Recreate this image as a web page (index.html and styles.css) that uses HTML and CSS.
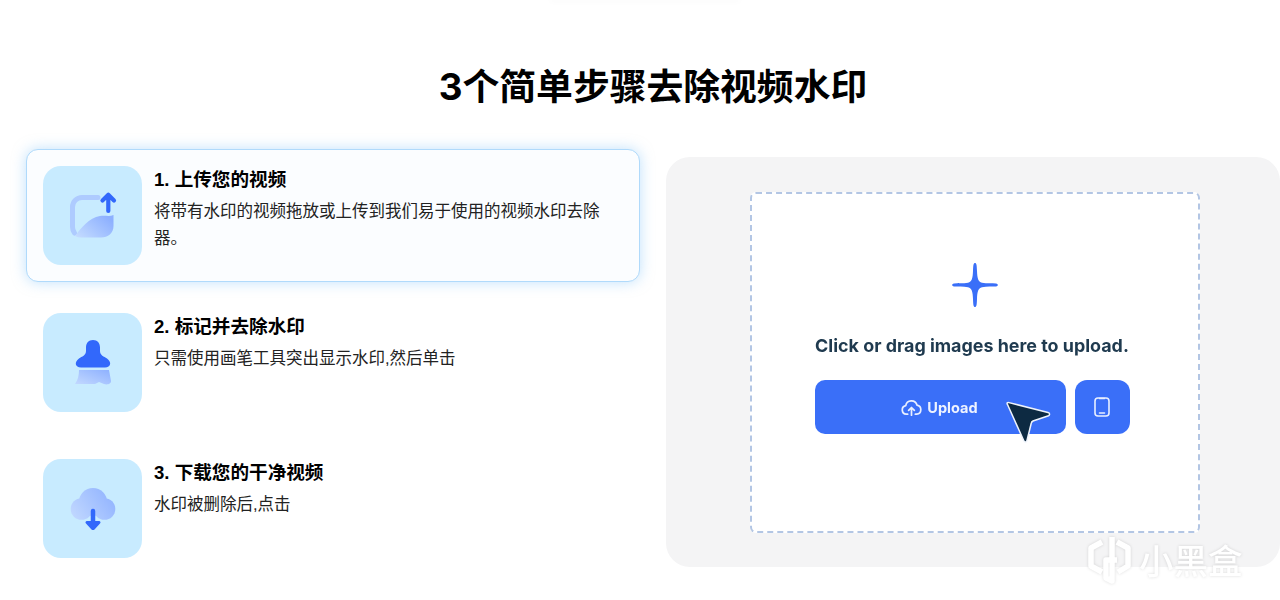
FILE: index.html
```html
<!DOCTYPE html>
<html lang="zh-CN">
<head>
<meta charset="utf-8">
<title>3个简单步骤去除视频水印</title>
<link rel="stylesheet" href="styles.css">
</head>
<body>
<div class="top-edge"></div>
<main class="page">
  <h1 class="title">3个简单步骤去除视频水印</h1>
  <div class="columns">
    <ul class="steps">
      <li class="step step-active">
        <div class="step-icon">
          <svg viewBox="0 0 99 99" width="99" height="99">
            <defs>
              <linearGradient id="g1" x1="0" y1="1" x2="1" y2="0.300"><stop offset="0" stop-color="#c6ddff"/><stop offset="1" stop-color="#8db0ff"/></linearGradient>
            </defs>
            <path d="M55 31.500H39a9.500 9.500 0 0 0-9.500 9.500v20a10 10 0 0 0 2 6" fill="none" stroke="#aecbff" stroke-width="5" stroke-linecap="round"/>
            <path d="M32 70C38 62 46 52 57 50C62 49 66 51 70.500 49V60C70.500 67 65 71.500 58 71.500H38C36 71.500 34 71 32 70Z" fill="url(#g1)"/>
            <path d="M65.300 45V29M59.500 34.500L65.300 28.800L71 34.500" fill="none" stroke="#3268fb" stroke-width="4.200" stroke-linecap="round" stroke-linejoin="round"/>
          </svg>
        </div>
        <div class="step-text">
          <h3>1. 上传您的视频</h3>
          <p>将带有水印的视频拖放或上传到我们易于使用的视频水印去除器。</p>
        </div>
      </li>
      <li class="step">
        <div class="step-icon">
          <svg viewBox="0 0 99 99" width="99" height="99">
            <defs>
              <linearGradient id="g2" x1="0" y1="1" x2="1" y2="0"><stop offset="0" stop-color="#c3d9ff"/><stop offset="1" stop-color="#8db0ff"/></linearGradient>
            </defs>
            <path d="M50 27C54.500 27 57 30 57 34.500V38C57 42.500 61 43.500 64 45.500C69 49 68 54.500 62 54.500H38C32 54.500 31 49 36 45.500C39 43.500 43 42.500 43 38V34.500C43 30 45.500 27 50 27Z" fill="#3268fb"/>
            <path d="M36 57H66L68 68C68.300 71 64 72 61 71L56 69L52 71H32C35 67 36 62 36 57Z" fill="url(#g2)"/>
          </svg>
        </div>
        <div class="step-text">
          <h3>2. 标记并去除水印</h3>
          <p>只需使用画笔工具突出显示水印,然后单击</p>
        </div>
      </li>
      <li class="step">
        <div class="step-icon">
          <svg viewBox="0 0 99 99" width="99" height="99">
            <defs>
              <linearGradient id="g3" gradientUnits="userSpaceOnUse" x1="28" y1="60" x2="72" y2="30"><stop offset="0" stop-color="#c3d9ff"/><stop offset="1" stop-color="#8db0ff"/></linearGradient>
            </defs>
            <g fill="url(#g3)">
              <circle cx="50" cy="43" r="14"/>
              <circle cx="38.500" cy="50" r="10.800"/>
              <circle cx="61.500" cy="50" r="10.800"/>
            </g>
            <path d="M50 52V63" stroke="#3268fb" stroke-width="4.500" stroke-linecap="round"/>
            <path d="M44 62H56C57.500 62 58 63.500 57 64.500L51.500 70.500C50.600 71.300 49.400 71.300 48.500 70.500L43 64.500C42 63.500 42.500 62 44 62Z" fill="#3268fb"/>
          </svg>
        </div>
        <div class="step-text">
          <h3>3. 下载您的干净视频</h3>
          <p>水印被删除后,点击</p>
        </div>
      </li>
    </ul>
    <section class="panel">
      <div class="dropzone">
        <svg class="sparkle" viewBox="0 0 46 44" width="46" height="44">
          <path d="M23 0C24.500 0 24.800 2 25 8C25.300 15 26 19 30 19.800C35 20.600 40 20.300 44 20.500C46.400 20.800 46.400 23.200 44 23.500C40 23.700 35 23.400 30 24.200C26 25 25.300 29 25 36C24.800 42 24.500 44 23 44C21.500 44 21.200 42 21 36C20.700 29 20 25 16 24.200C11 23.400 6 23.700 2 23.500C-0.400 23.200 -0.400 20.800 2 20.500C6 20.300 11 20.600 16 19.800C20 19 20.700 15 21 8C21.200 2 21.500 0 23 0Z" fill="#3a6ff8"/>
        </svg>
        <p class="drop-label">Click or drag images here to upload.</p>
        <div class="drop-actions">
          <div class="upload-btn">
            <svg viewBox="0 0 24 24" width="23" height="23" fill="none" stroke="#e8efff" stroke-width="1.800" stroke-linecap="round" stroke-linejoin="round">
              <path d="M8 19H6.500A4.500 4.500 0 0 1 6 10.100A6 6 0 0 1 17.700 9.500A4.800 4.800 0 0 1 17.500 19H16"/>
              <path d="M12 20V12.500M9 15L12 12L15 15"/>
            </svg>
            <span>Upload</span>
          </div>
          <div class="phone-btn">
            <svg viewBox="0 0 16 20" width="16" height="20" fill="none" stroke="#e8efff" stroke-width="1.600" stroke-linecap="round">
              <rect x="1" y="1" width="14" height="18" rx="3"/>
              <path d="M5.500 1.500H10.500M5.500 16H10.500"/>
            </svg>
          </div>
        </div>
        <svg class="cursor" viewBox="0 0 48 44" width="48" height="44">
          <path d="M3.500 3.500C2.500 2 3.500 1.200 5 1.600L44 11.500C46 12 46 14 44.500 14.700L29 20C28 20.500 27.500 21 27.300 22L23 39.500C22.500 41.500 20.500 41.500 19.800 39.800Z" fill="#0d2a42" stroke="#eef3fb" stroke-width="1.500" stroke-linejoin="round"/>
        </svg>
      </div>
    </section>
  </div>
</main>
<div class="watermark">
  <svg viewBox="0 0 44 50" width="44" height="50" fill="none" stroke="#ffffff" stroke-width="5.500" stroke-linejoin="round">
    <path d="M15 8L4 14V32L15 38"/>
    <path d="M25 3V47L19 44V26H30"/>
    <path d="M30 8L41 14V32L31 38"/>
  </svg>
  <span>小黑盒</span>
</div>
</body>
</html>
```
FILE: styles.css
```css
* {
  box-sizing: border-box;
}

html,
body {
  margin: 0;
  height: 600px;
  overflow: hidden;
  background: #ffffff;
}

body {
  position: relative;
  font-family: "Liberation Sans", "Noto Sans CJK SC", sans-serif;
  color: #000000;
}

.top-edge {
  width: 190px;
  height: 1px;
  margin: -1px 0 0 550px;
  box-shadow: 0 0 7px rgba(0, 0, 0, 0.1);
}

.page {
  width: 1254px;
  margin-left: 26px;
}

.title {
  margin: 0;
  padding-top: 64px;
  height: 149px;
  font-family: Inter, "Noto Sans CJK SC", sans-serif;
  font-size: 36.800px;
  line-height: 46px;
  font-weight: 700;
  text-align: center;
}

.columns {
  display: flex;
  align-items: flex-start;
  gap: 26px;
}

.steps {
  width: 614px;
  margin: 0;
  padding: 0;
  list-style: none;
  display: flex;
  flex-direction: column;
  gap: 13.500px;
}

.step {
  display: flex;
  gap: 12px;
  height: 133px;
  padding: 16px;
  border: 1px solid transparent;
  border-radius: 12px;
}

.step-active {
  background: #fbfdff;
  border-color: #b0dafb;
  box-shadow: 0 0 14px rgba(130, 195, 250, 0.5);
}

.step-icon {
  flex: none;
  width: 99px;
  height: 99px;
  border-radius: 18px;
  background: #c8ebff;
}

.step-icon svg {
  display: block;
}

.step-text {
  flex: 1;
  min-width: 0;
  padding-right: 10px;
}

.step-text h3 {
  margin: 0;
  padding-top: 2px;
  font-size: 18.600px;
  line-height: 24px;
  font-weight: 700;
}

.step-text p {
  margin: 6px 0 0;
  font-size: 16.500px;
  line-height: 27px;
  color: #222222;
}

.panel {
  width: 614px;
  height: 410px;
  margin-top: 8px;
  padding: 35px 0 0 84px;
  background: #f4f4f5;
  border-radius: 24px;
}

.dropzone {
  position: relative;
  width: 450px;
  height: 341px;
  padding: 69px 6px 0 0;
  display: flex;
  flex-direction: column;
  align-items: center;
  background: #ffffff;
  border: 2px dashed #b3c6e4;
  border-radius: 6px;
  filter: blur(0.3px);
}

.sparkle {
  display: block;
  margin-left: 5px;
}

.drop-label {
  margin: 27px 0 0;
  font-family: Inter, sans-serif;
  font-size: 17.900px;
  line-height: 24px;
  font-weight: 700;
  color: #1f3a4f;
  white-space: nowrap;
}

.drop-actions {
  display: flex;
  gap: 9px;
  margin-top: 22px;
}

.upload-btn {
  width: 251px;
  height: 54px;
  display: flex;
  align-items: center;
  justify-content: center;
  gap: 4px;
  padding-right: 2px;
  background: #3a6ff8;
  border-radius: 10px;
  color: #eef3ff;
  font-family: Inter, sans-serif;
  font-size: 14.500px;
  font-weight: 700;
}

.phone-btn {
  width: 55px;
  height: 54px;
  display: flex;
  align-items: center;
  justify-content: center;
  background: #3a6ff8;
  border-radius: 12px;
}

.cursor {
  position: absolute;
  left: 252px;
  top: 207px;
}

.watermark {
  position: absolute;
  left: 1087px;
  top: 534px;
  display: flex;
  align-items: center;
  gap: 8px;
  color: #ffffff;
  filter: drop-shadow(0 0 1.500px rgba(0, 0, 0, 0.14));
}

.watermark span {
  font-family: "Noto Sans CJK SC", sans-serif;
  font-size: 34.500px;
  font-weight: 500;
  line-height: 50px;
  white-space: nowrap;
}

.watermark svg {
  display: block;
}
```
